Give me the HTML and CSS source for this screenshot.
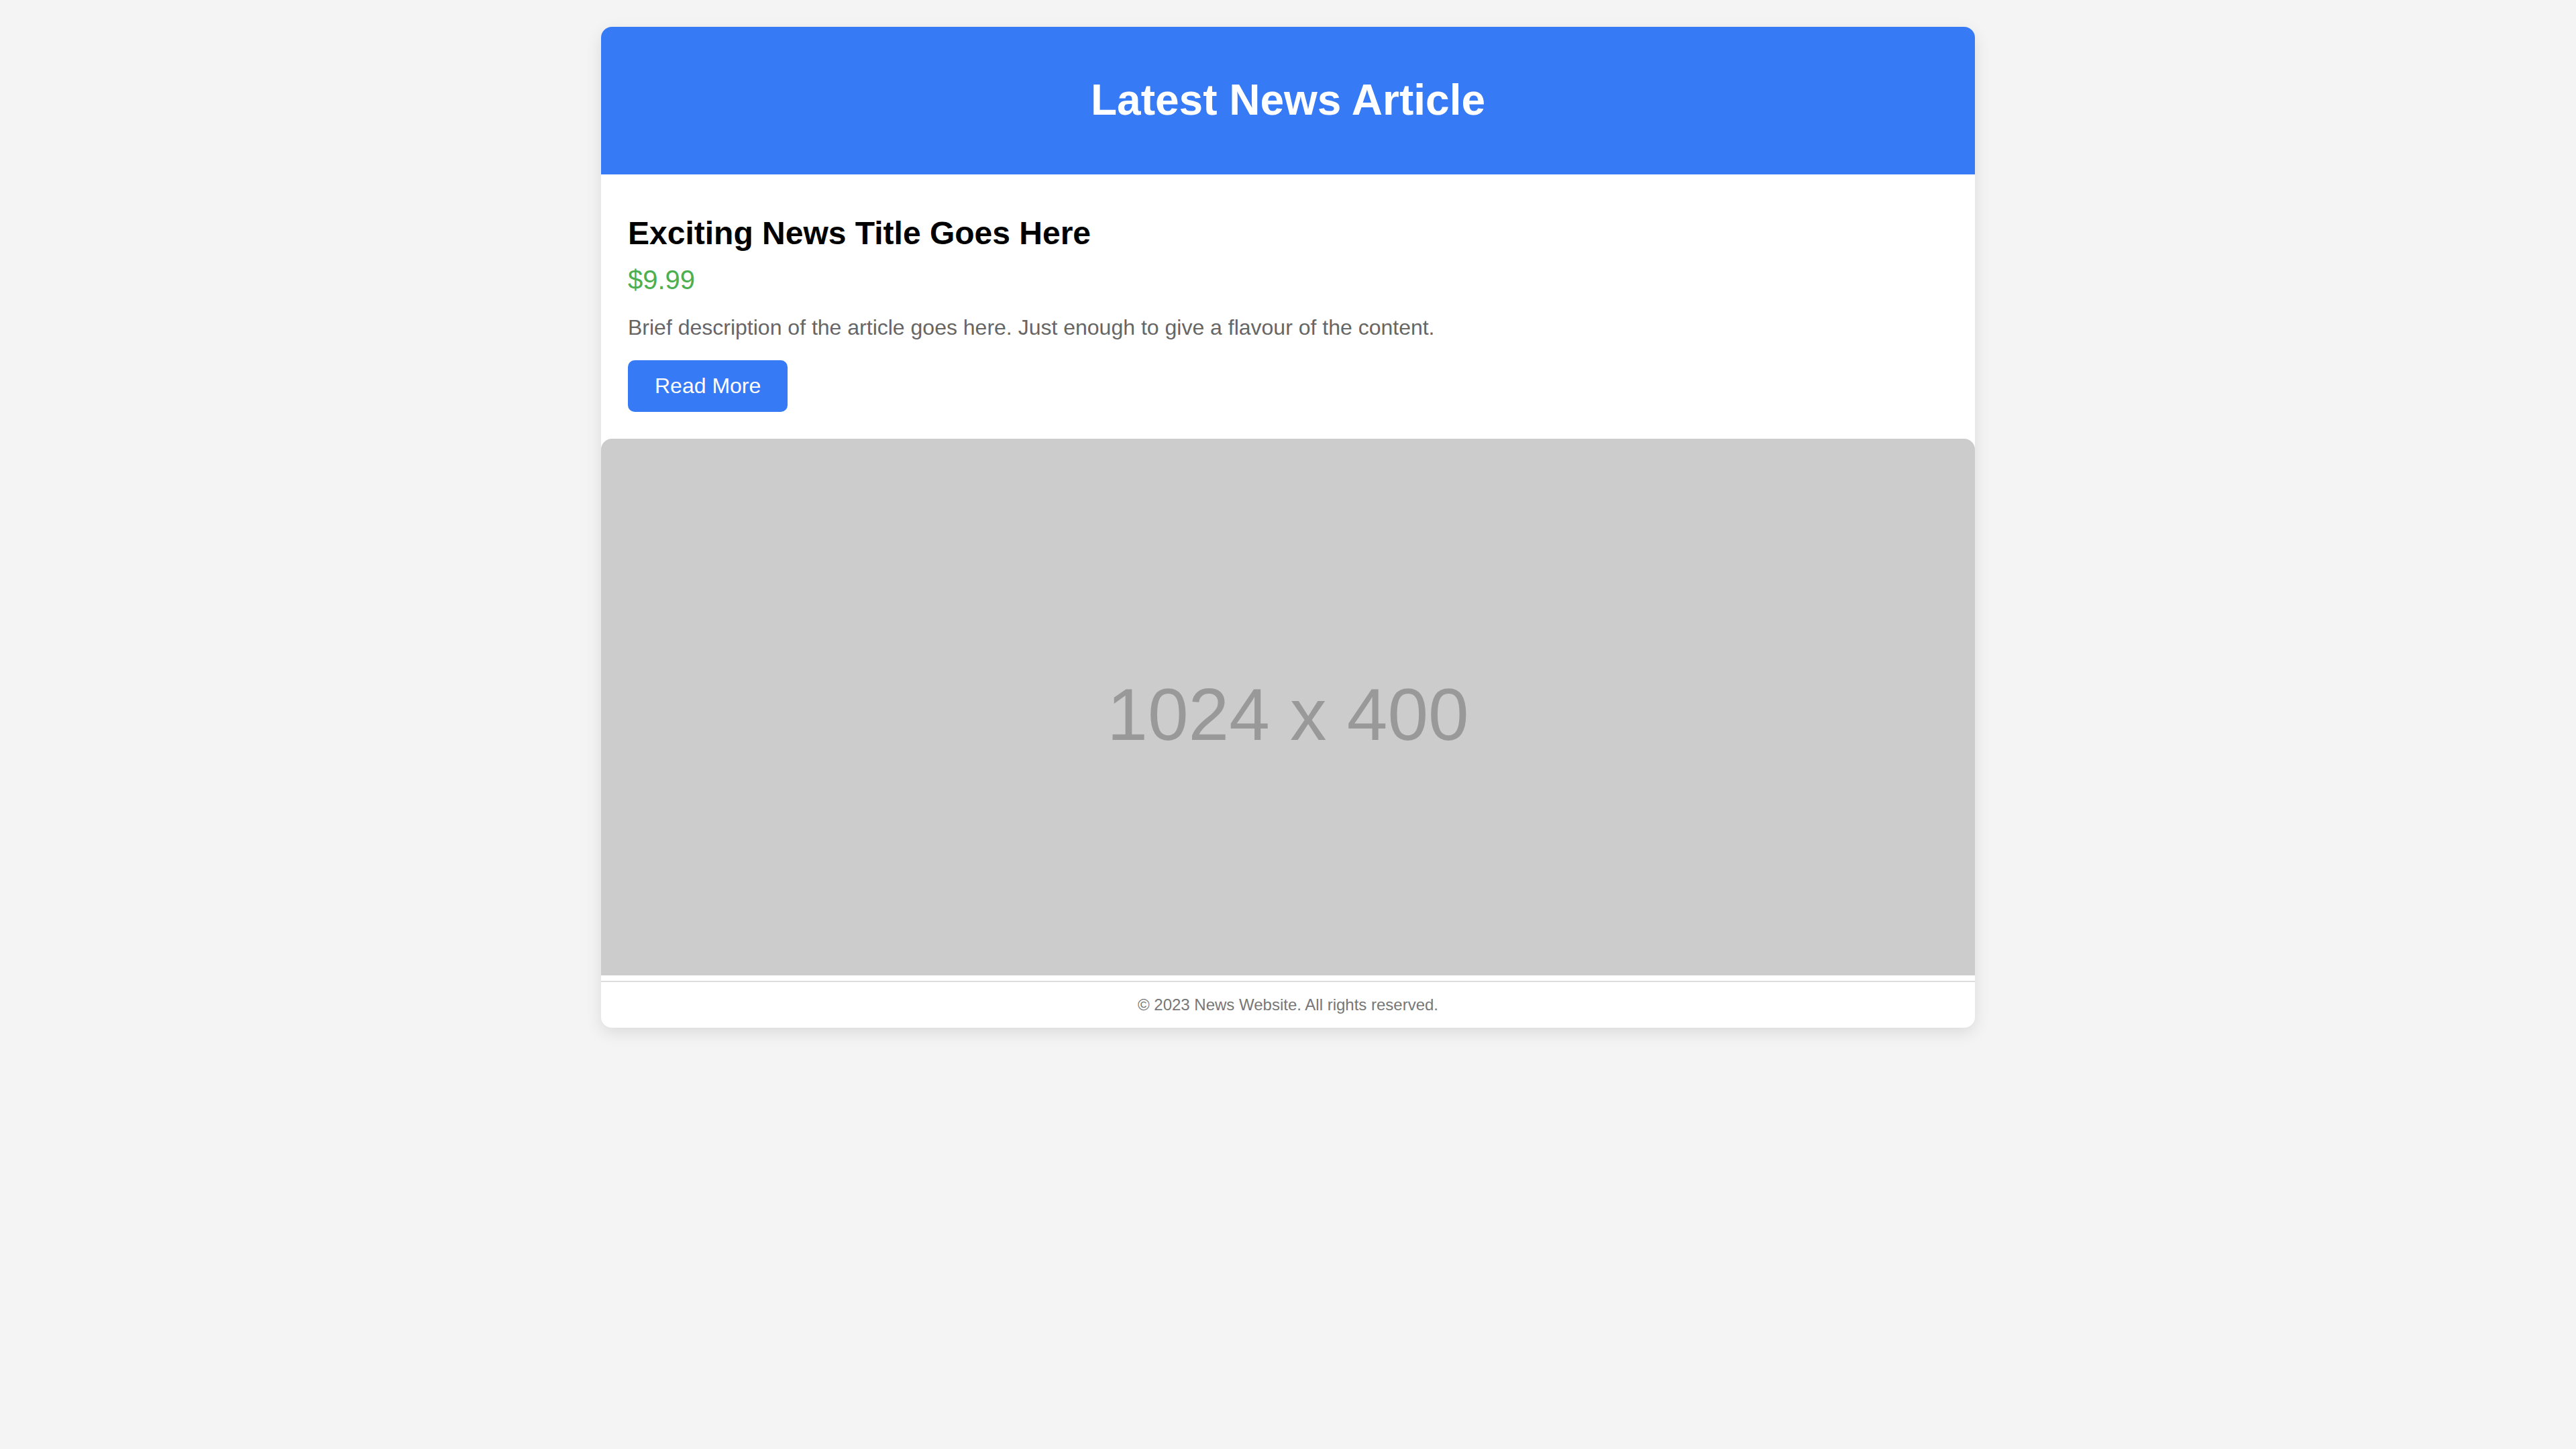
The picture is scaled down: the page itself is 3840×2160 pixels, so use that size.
FILE: index.html
```html
<!DOCTYPE html>
<html lang="en">
<head>
<meta charset="utf-8">
<title>Latest News Article</title>
<link rel="stylesheet" href="styles.css">
</head>
<body>
<div class="card">
  <header class="card-header">
    <h1 class="card-title">Latest News Article</h1>
  </header>
  <section class="content">
    <h2 class="news-title">Exciting News Title Goes Here</h2>
    <p class="price">$9.99</p>
    <p class="desc">Brief description of the article goes here. Just enough to give a flavour of the content.</p>
    <a class="btn" href="#">Read More</a>
  </section>
  <div class="placeholder"><span class="placeholder-text">1024 x 400</span></div>
  <footer class="footer">© 2023 News Website. All rights reserved.</footer>
</div>
</body>
</html>
```

FILE: styles.css
```css
html, body {
  margin: 0;
  padding: 0;
}
body {
  background: #f4f4f4;
  font-family: "Liberation Sans", Arial, sans-serif;
  padding-top: 40px;
  min-height: 2120px;
}
.card {
  width: 2048px;
  margin: 0 auto;
  background: #ffffff;
  border-radius: 16px;
  overflow: hidden;
  box-shadow: 0 8px 24px rgba(0, 0, 0, 0.1);
}
.card-header {
  background: #377af5;
  height: 220px;
  display: flex;
  align-items: center;
  justify-content: center;
}
.card-title {
  margin: 0;
  color: #ffffff;
  font-size: 64px;
  font-weight: bold;
  line-height: 1.15;
}
.content {
  padding: 40px;
  display: flex;
  flex-direction: column;
  align-items: flex-start;
}
.news-title {
  margin: 20px 0 20px;
  font-size: 48px;
  font-weight: bold;
  color: #000000;
  line-height: normal;
}
.price {
  margin: 0 0 30px;
  font-size: 40px;
  color: #4caf50;
  line-height: normal;
}
.desc {
  margin: 0 0 30px;
  font-size: 32px;
  color: #666666;
  line-height: normal;
}
.btn {
  display: inline-block;
  background: #377af5;
  color: #ffffff;
  text-decoration: none;
  font-size: 32px;
  line-height: normal;
  padding: 20px 40px;
  border-radius: 10px;
}
.placeholder {
  height: 800px;
  background: #cccccc;
  border-radius: 16px 16px 0 0;
  margin-bottom: 8px;
  display: flex;
  align-items: center;
  justify-content: center;
  padding-top: 24px;
  box-sizing: border-box;
}
.placeholder-text {
  font-size: 109px;
  color: #999999;
  line-height: 1.15;
}
.footer {
  border-top: 2px solid #dddddd;
  padding: 20px 0;
  text-align: center;
  font-size: 24px;
  color: #777777;
  line-height: 28px;
}
```
